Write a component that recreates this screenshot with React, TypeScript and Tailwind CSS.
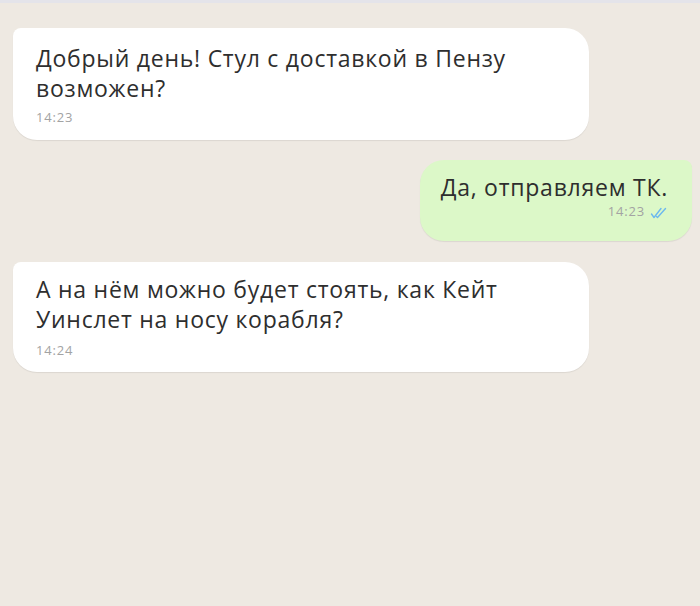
import React from "react";

function Checks() {
  return (
    <svg width="17" height="12" viewBox="0 0 17 12" fill="none" className="ml-[5px] mb-[1px]">
      <path d="M1.5 7 L4 10.5 L11 1.5" stroke="#6cb8ef" strokeWidth="1.4" strokeLinecap="round" strokeLinejoin="round" />
      <path d="M6.5 9.5 L7.5 10.5 L15.5 1.5" stroke="#6cb8ef" strokeWidth="1.4" strokeLinecap="round" strokeLinejoin="round" />
    </svg>
  );
}

export default function App() {
  return (
    <div
      className="w-[700px] h-[606px] bg-[#eee9e2] flex flex-col overflow-hidden"
      style={{ fontFamily: '"Open Sans", "Noto Sans", sans-serif' }}
    >
      <div className="h-[3px] bg-[#e4e4ea] shrink-0" />
      <div className="flex flex-col pt-[25px] px-[13px]">
        <div className="w-[576px] h-[112px] bg-white rounded-[24px] rounded-tl-[8px] shadow-[0_1px_1px_rgba(0,0,0,0.08)] pl-[23px] pr-[20px] pt-[15px]">
          <div className="text-[23px] leading-[30px] text-[#2e2e2e] tracking-[0.75px]">
            Добрый день! Стул с доставкой в Пензу возможен?
          </div>
          <div className="text-[13px] text-[#a3a3a3] mt-[6px] leading-[17px] tracking-[0.8px]">14:23</div>
        </div>

        <div className="self-end mt-[20px] mr-[-5px] w-[272px] h-[81px] bg-[#dcf8c8] rounded-[24px] rounded-tr-[8px] shadow-[0_1px_1px_rgba(0,0,0,0.08)] pr-[24px] pt-[12px] flex flex-col items-end">
          <div className="text-[23px] leading-[30px] text-[#2e2e2e] tracking-[0.75px]">Да, отправляем ТК.</div>
          <div className="flex items-end text-[13px] text-[#a3a3a3] leading-[17px] mt-[1px] mr-[1px] tracking-[0.8px]">
            14:23
            <Checks />
          </div>
        </div>

        <div className="mt-[21px] w-[576px] h-[110px] bg-white rounded-[24px] rounded-tl-[8px] shadow-[0_1px_1px_rgba(0,0,0,0.08)] pl-[23px] pr-[20px] pt-[12px]">
          <div className="text-[23px] leading-[30px] text-[#2e2e2e] tracking-[0.75px]">
            А на нём можно будет стоять, как Кейт Уинслет на носу корабля?
          </div>
          <div className="text-[13px] text-[#a3a3a3] mt-[8px] leading-[17px] tracking-[0.8px]">14:24</div>
        </div>
      </div>
    </div>
  );
}
